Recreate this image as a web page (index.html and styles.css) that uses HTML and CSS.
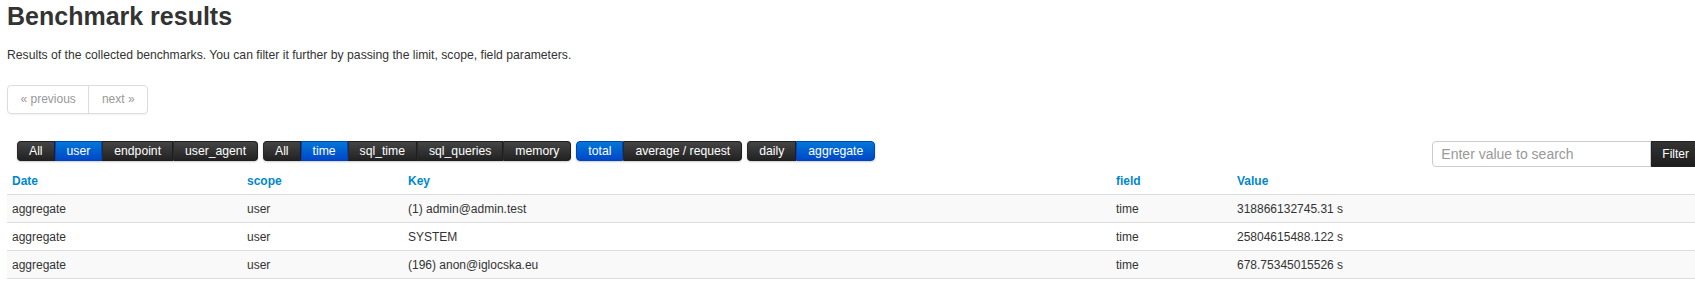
FILE: index.html
```html
<!DOCTYPE html>
<html>
<head>
	<title>Benchmark results</title>
	<link rel="stylesheet" href="styles.css">
</head>
<body>
	<div class="page">
		<h3 class="title">Benchmark results</h3>
		<p class="note">Results of the collected benchmarks. You can filter it further by passing the limit, scope, field parameters.</p>

		<div class="pager">
			<a href="#" class="pager-item">&laquo; previous</a>
			<a href="#" class="pager-item">next &raquo;</a>
		</div>

		<div class="toolbar">
			<div class="btn-groups">
				<div class="btn-group">
					<a href="#" class="btn">All</a>
					<a href="#" class="btn active">user</a>
					<a href="#" class="btn">endpoint</a>
					<a href="#" class="btn">user_agent</a>
				</div>
				<div class="btn-group">
					<a href="#" class="btn">All</a>
					<a href="#" class="btn active">time</a>
					<a href="#" class="btn">sql_time</a>
					<a href="#" class="btn">sql_queries</a>
					<a href="#" class="btn">memory</a>
				</div>
				<div class="btn-group">
					<a href="#" class="btn active">total</a>
					<a href="#" class="btn">average / request</a>
				</div>
				<div class="btn-group">
					<a href="#" class="btn">daily</a>
					<a href="#" class="btn active">aggregate</a>
				</div>
			</div>
			<form class="search">
				<input type="text" class="search-input" placeholder="Enter value to search">
				<button type="button" class="search-btn">Filter</button>
			</form>
		</div>

		<table class="results">
			<thead>
				<tr>
					<th class="col-date"><a href="#">Date</a></th>
					<th class="col-scope"><a href="#">scope</a></th>
					<th class="col-key"><a href="#">Key</a></th>
					<th class="col-field"><a href="#">field</a></th>
					<th><a href="#">Value</a></th>
				</tr>
			</thead>
			<tbody>
				<tr>
					<td>aggregate</td>
					<td>user</td>
					<td>(1) admin@admin.test</td>
					<td>time</td>
					<td>318866132745.31 s</td>
				</tr>
				<tr>
					<td>aggregate</td>
					<td>user</td>
					<td>SYSTEM</td>
					<td>time</td>
					<td>25804615488.122 s</td>
				</tr>
				<tr>
					<td>aggregate</td>
					<td>user</td>
					<td>(196) anon@iglocska.eu</td>
					<td>time</td>
					<td>678.75345015526 s</td>
				</tr>
			</tbody>
		</table>
	</div>
</body>
</html>
```

FILE: styles.css
```css
html, body{
	margin: 0;
	overflow: hidden;
	background: #fff;
}
body{
	font-family: "Liberation Sans", Arial, sans-serif;
	font-size: 12px;
	color: #333;
}
.page{
	width: 1693px;
	padding: 1px 0 0 7px;
}
.title{
	margin: 0;
	font-size: 25px;
	line-height: 30px;
	font-weight: bold;
	color: #333;
}
.note{
	margin: 15px 0 0;
	font-family: "Liberation Sans Narrow", "Liberation Sans", sans-serif;
	font-size: 12.2px;
	line-height: 18px;
}
a{
	text-decoration: none;
}

/* pager */
.pager{
	display: inline-flex;
	margin-top: 21px;
	border: 1px solid #ddd;
	border-radius: 4px;
	box-shadow: 0 1px 2px rgba(0,0,0,.05);
}
.pager-item{
	display: block;
	padding: 0 12.5px;
	line-height: 27px;
	color: #999;
}
.pager-item + .pager-item{
	border-left: 1px solid #ddd;
}

/* toolbar */
.toolbar{
	display: flex;
	justify-content: space-between;
	align-items: flex-start;
	margin-top: 27px;
}
.btn-groups{
	display: flex;
	gap: 5px;
	margin-left: 10px;
}
.btn-group{
	display: flex;
	border-radius: 4px;
	box-shadow: 0 1px 2px rgba(0,0,0,.2);
}
.btn{
	display: block;
	padding: 0 11px;
	font-size: 12.2px;
	line-height: 18px;
	border: 1px solid #1f1f1f;
	border-left-color: #2a2a2a;
	color: #fff;
	background: #363636;
	background-image: linear-gradient(to bottom, #444, #222);
}
.btn:first-child{
	border-radius: 4px 0 0 4px;
}
.btn:last-child{
	border-radius: 0 4px 4px 0;
}
.btn.active{
	background: #0055cc;
	background-image: linear-gradient(to bottom, #0077d6, #0047c8);
	border-color: #0044bb;
}
.search{
	display: flex;
	margin: 0;
}
.search-input{
	width: 219px;
	height: 26px;
	box-sizing: border-box;
	padding: 0 8px;
	border: 1px solid #ccc;
	border-radius: 4px 0 0 4px;
	font-family: "Liberation Sans", Arial, sans-serif;
	font-size: 14px;
	color: #555;
	outline: none;
}
.search-input::placeholder{
	color: #999;
}
.search-btn{
	height: 26px;
	padding: 0 10px;
	border: 1px solid #222;
	background: #222;
	background-image: linear-gradient(to bottom, #333, #1d1d1d);
	color: #fff;
	font-family: "Liberation Sans", Arial, sans-serif;
	font-size: 12px;
}

/* table */
.results{
	width: 100%;
	border-collapse: collapse;
}
.results th, .results td{
	height: 27px;
	padding: 0 5px;
	text-align: left;
	vertical-align: middle;
	border-bottom: 1px solid #ddd;
}
.results th{
	font-weight: bold;
}
.results th a{
	color: #0088cc;
}
.results tbody tr:nth-child(odd) td{
	background: #f9f9f9;
}
.col-date{
	width: 225px;
}
.col-scope{
	width: 151px;
}
.col-key{
	width: 698px;
}
.col-field{
	width: 111px;
}
```
